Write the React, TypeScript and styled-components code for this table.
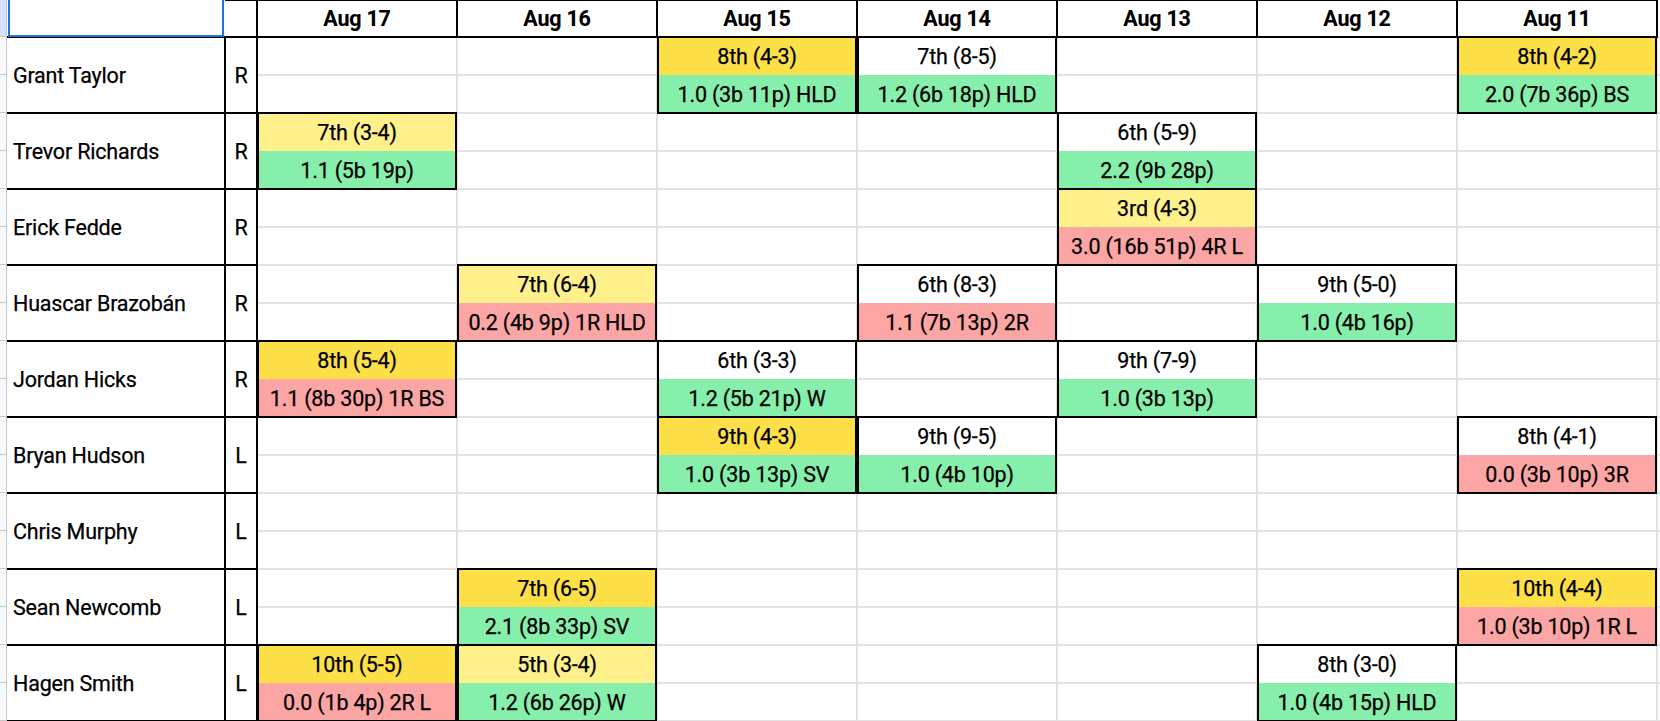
import styled, { createGlobalStyle } from "styled-components";

type Tone = "gold" | "lemon" | "plain" | "green" | "red";

const tones: Record<Tone, string> = {
  gold: "#fde047",
  lemon: "#fef08a",
  plain: "transparent",
  green: "#86efac",
  red: "#fca5a5",
};

type Outing = [string, Tone, string, Tone];

type Pitcher = {
  name: string;
  hand: "R" | "L";
  // keyed by column index, 0 = Aug 17
  outings: Record<number, Outing>;
};

const days = ["Aug 17", "Aug 16", "Aug 15", "Aug 14", "Aug 13", "Aug 12", "Aug 11"];

const pitchers: Pitcher[] = [
  {
    name: "Grant Taylor",
    hand: "R",
    outings: {
      2: ["8th (4-3)", "gold", "1.0 (3b 11p) HLD", "green"],
      3: ["7th (8-5)", "plain", "1.2 (6b 18p) HLD", "green"],
      6: ["8th (4-2)", "gold", "2.0 (7b 36p) BS", "green"],
    },
  },
  {
    name: "Trevor Richards",
    hand: "R",
    outings: {
      0: ["7th (3-4)", "lemon", "1.1 (5b 19p)", "green"],
      4: ["6th (5-9)", "plain", "2.2 (9b 28p)", "green"],
    },
  },
  {
    name: "Erick Fedde",
    hand: "R",
    outings: {
      4: ["3rd (4-3)", "lemon", "3.0 (16b 51p) 4R L", "red"],
    },
  },
  {
    name: "Huascar Brazobán",
    hand: "R",
    outings: {
      1: ["7th (6-4)", "lemon", "0.2 (4b 9p) 1R HLD", "red"],
      3: ["6th (8-3)", "plain", "1.1 (7b 13p) 2R", "red"],
      5: ["9th (5-0)", "plain", "1.0 (4b 16p)", "green"],
    },
  },
  {
    name: "Jordan Hicks",
    hand: "R",
    outings: {
      0: ["8th (5-4)", "gold", "1.1 (8b 30p) 1R BS", "red"],
      2: ["6th (3-3)", "plain", "1.2 (5b 21p) W", "green"],
      4: ["9th (7-9)", "plain", "1.0 (3b 13p)", "green"],
    },
  },
  {
    name: "Bryan Hudson",
    hand: "L",
    outings: {
      2: ["9th (4-3)", "gold", "1.0 (3b 13p) SV", "green"],
      3: ["9th (9-5)", "plain", "1.0 (4b 10p)", "green"],
      6: ["8th (4-1)", "plain", "0.0 (3b 10p) 3R", "red"],
    },
  },
  { name: "Chris Murphy", hand: "L", outings: {} },
  {
    name: "Sean Newcomb",
    hand: "L",
    outings: {
      1: ["7th (6-5)", "gold", "2.1 (8b 33p) SV", "green"],
      6: ["10th (4-4)", "gold", "1.0 (3b 10p) 1R L", "red"],
    },
  },
  {
    name: "Hagen Smith",
    hand: "L",
    outings: {
      0: ["10th (5-5)", "gold", "0.0 (1b 4p) 2R L", "red"],
      1: ["5th (3-4)", "lemon", "1.2 (6b 26p) W", "green"],
      5: ["8th (3-0)", "plain", "1.0 (4b 15p) HLD", "green"],
    },
  },
];

const GlobalStyle = createGlobalStyle`
  html, body {
    margin: 0;
    padding: 0;
    background: #ffffff;
  }
  * {
    box-sizing: border-box;
  }
`;

const grid = "#e1e1e1";
const stubLine = "#c4c7c5";

const Sheet = styled.div`
  position: relative;
  z-index: 0;
  display: grid;
  grid-template-columns: 7px 218px 32px repeat(7, 200px) 3px;
  grid-template-rows: 37px repeat(9, 76px);
  width: 1660px;
  height: 721px;
  overflow: hidden;
  font-family: Roboto, "Liberation Sans", sans-serif;
  font-size: 21.5px;
  letter-spacing: -0.2px;
  -webkit-text-stroke: 0.25px #000;
  color: #000;
  background: #fff;
`;

const Stub = styled.div<{ $head?: boolean }>`
  display: flex;
  flex-direction: column;
  background: ${(p) => (p.$head ? "#d3e3fd" : "#f8f9fa")};
  border-right: 1px solid ${stubLine};
  border-bottom: ${(p) => (p.$head ? `1px solid ${stubLine}` : "none")};
`;

const StubHalf = styled.div`
  flex: 1;
  border-bottom: 1px solid ${stubLine};
`;

const Framed = styled.div`
  position: relative;
  &::after {
    content: "";
    position: absolute;
    inset: -1px;
    border: 2px solid #000;
    pointer-events: none;
    z-index: 1;
  }
`;

const Corner = styled.div`
  position: relative;
  &::after {
    content: "";
    position: absolute;
    top: 0;
    left: 1px;
    right: 1px;
    bottom: 0;
    border: 2px solid #1a73e8;
    border-top: none;
    z-index: 2;
  }
`;

const HandHead = styled(Framed)`
  &::after {
    inset: -1px -1px -1px 0;
    border-left: none;
  }
`;

const DayHead = styled(Framed)`
  display: flex;
  align-items: center;
  justify-content: center;
  font-weight: 700;
  -webkit-text-stroke: 0.1px #000;
`;

const NameCell = styled(Framed)`
  display: flex;
  align-items: center;
  padding-left: 6px;
  white-space: nowrap;
  &::after {
    inset: -1px -1px -1px 0;
    border-left: none;
  }
`;

const HandCell = styled(Framed)`
  display: flex;
  align-items: center;
  justify-content: center;
`;

const DaySlot = styled.div<{ $framed?: boolean }>`
  position: relative;
  display: flex;
  flex-direction: column;
  border-left: 1px solid ${grid};
  border-right: 1px solid ${grid};
  &::after {
    content: ${(p) => (p.$framed ? '""' : "none")};
    position: absolute;
    inset: -1px;
    border: 2px solid #000;
    pointer-events: none;
    z-index: 1;
  }
`;

const DayHalf = styled.div<{ $tone?: Tone; $lined?: boolean }>`
  flex: 1;
  display: flex;
  align-items: center;
  justify-content: center;
  white-space: nowrap;
  background: ${(p) => tones[p.$tone ?? "plain"]};
  border-top: ${(p) => (p.$lined ? `1px solid ${grid}` : "none")};
  border-bottom: ${(p) => (p.$lined ? `1px solid ${grid}` : "none")};
`;

const Edge = styled.div`
  display: flex;
  flex-direction: column;
  border-left: 1px solid ${grid};
`;

function EmptySlot({ edge }: { edge?: boolean }) {
  const Box = edge ? Edge : DaySlot;
  return (
    <Box>
      <DayHalf $lined />
      <DayHalf $lined />
    </Box>
  );
}

function OutingSlot({ outing }: { outing: Outing }) {
  const [top, topTone, bottom, bottomTone] = outing;
  return (
    <DaySlot $framed>
      <DayHalf $tone={topTone}>{top}</DayHalf>
      <DayHalf $tone={bottomTone}>{bottom}</DayHalf>
    </DaySlot>
  );
}

function Row({ pitcher }: { pitcher: Pitcher }) {
  return (
    <>
      <Stub>
        <StubHalf />
        <StubHalf />
      </Stub>
      <NameCell>{pitcher.name}</NameCell>
      <HandCell>{pitcher.hand}</HandCell>
      {days.map((d, i) =>
        pitcher.outings[i] ? (
          <OutingSlot key={d} outing={pitcher.outings[i]} />
        ) : (
          <EmptySlot key={d} />
        )
      )}
      <EmptySlot edge />
    </>
  );
}

export default function App() {
  return (
    <>
      <GlobalStyle />
      <Sheet>
        <Stub $head />
        <Corner />
        <HandHead />
        {days.map((d) => (
          <DayHead key={d}>{d}</DayHead>
        ))}
        <Edge />
        {pitchers.map((p) => (
          <Row key={p.name} pitcher={p} />
        ))}
      </Sheet>
    </>
  );
}
